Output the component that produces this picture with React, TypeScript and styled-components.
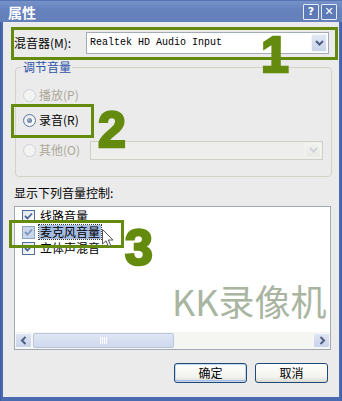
import React from 'react';
import styled, { createGlobalStyle } from 'styled-components';

const GlobalStyle = createGlobalStyle`
  html, body {
    margin: 0;
    padding: 0;
    background: #ebebeb;
  }
  body {
    font-family: "Noto Sans CJK SC", "Liberation Sans", sans-serif;
    font-size: 12px;
    color: #000;
  }
  * {
    box-sizing: border-box;
  }
`;

const Window = styled.div`
  position: relative;
  width: 342px;
  height: 401px;
  display: flex;
  flex-direction: column;
  background: #4565ab;
  overflow: hidden;
`;

const TitleBar = styled.div`
  height: 22px;
  display: flex;
  align-items: center;
  padding: 0 5px 0 8px;
  background: linear-gradient(#7792c9, #6682bd 40%, #6480bb);
  border-top: 1px solid #5674b4;
`;

const TitleText = styled.span`
  flex: 1;
  color: #fff;
  font-weight: bold;
  font-size: 14px;
  line-height: 16px;
`;

const TitleButtons = styled.div`
  display: flex;
  gap: 2px;
`;

const CaptionButton = styled.div`
  width: 16px;
  height: 16px;
  border: 1px solid #e4eaf6;
  border-radius: 1px;
  background: #5d79b6;
  color: #fff;
  font-family: "DejaVu Sans", sans-serif;
  font-weight: bold;
  font-size: 11px;
  line-height: 14px;
  text-align: center;
`;

const Frame = styled.div`
  flex: 1;
  display: flex;
  padding: 0 3px 4px 3px;
  background: linear-gradient(90deg, #3c5ca6, #4b6bb1 2px, #4b6bb1 calc(100% - 2px), #3c5ca6);
`;

const Client = styled.div`
  flex: 1;
  display: flex;
  flex-direction: column;
  background: #ebebeb;
  padding: 10px 7px 0 11px;
`;

const MixerRow = styled.div`
  display: flex;
  align-items: center;
  height: 22px;
`;

const FieldLabel = styled.span<{ width?: number; muted?: boolean }>`
  width: ${(p) => (p.width ? `${p.width}px` : 'auto')};
  flex: none;
  line-height: 16px;
  color: ${(p) => (p.muted ? '#aca899' : '#000')};
`;

const Combo = styled.div<{ width: number; height: number; disabled?: boolean }>`
  width: ${(p) => p.width}px;
  height: ${(p) => p.height}px;
  display: flex;
  padding: 1px;
  border: 1px solid ${(p) => (p.disabled ? '#cfcfc6' : '#a2abb6')};
  background: ${(p) => (p.disabled ? '#eeeeec' : '#fff')};
`;

const ComboText = styled.span`
  flex: 1;
  padding-left: 2px;
  font-family: "Liberation Mono", monospace;
  font-size: 10px;
  line-height: 18px;
  white-space: nowrap;
`;

const DropButton = styled.div<{ disabled?: boolean }>`
  width: 16px;
  display: flex;
  align-items: center;
  justify-content: center;
  border-radius: 2px;
  border: 1px solid ${(p) => (p.disabled ? '#f4f4f2' : '#f2f5fb')};
  background: ${(p) =>
    p.disabled
      ? 'linear-gradient(#f2f2f0, #e8e8e4)'
      : 'linear-gradient(#e2e8f4, #c9d3e8)'};
`;

const GroupBox = styled.div`
  margin: 13px 0 0 1px;
  width: 317px;
  padding: 0 0 16px 7px;
  border: 1px solid #d3d3ca;
  border-radius: 4px;
`;

const GroupTitle = styled.div`
  display: table;
  margin: -9px 0 0 -1px;
  padding: 0 1px;
  background: #ebebeb;
  color: #2c53a8;
  line-height: 16px;
`;

const RadioRow = styled.div<{ gapTop: number }>`
  display: flex;
  align-items: center;
  gap: 3px;
  height: 20px;
  margin-top: ${(p) => p.gapTop}px;
`;

const Radio = styled.span<{ checked?: boolean; disabled?: boolean }>`
  position: relative;
  width: 13px;
  height: 13px;
  flex: none;
  border-radius: 50%;
  border: 1px solid ${(p) => (p.disabled ? '#cdd3dc' : '#5a77a3')};
  background: ${(p) =>
    p.disabled
      ? '#f3f3f1'
      : 'radial-gradient(circle at 65% 65%, #ffffff, #e1e4ea)'};

  &::after {
    content: '';
    display: ${(p) => (p.checked ? 'block' : 'none')};
    position: absolute;
    left: 3px;
    top: 3px;
    width: 5px;
    height: 5px;
    border-radius: 50%;
    background: radial-gradient(circle at 40% 40%, #9fb0c8, #4b6590);
  }
`;

const Caption = styled.div`
  margin-top: 8px;
  line-height: 16px;
`;

const ListBox = styled.div`
  margin-top: 5px;
  width: 317px;
  height: 144px;
  display: flex;
  flex-direction: column;
  border: 1px solid #a0a9b5;
  background: #fff;
`;

const Items = styled.div`
  flex: 1;
  padding: 1px 0 0 7px;
`;

const ItemRow = styled.div`
  display: flex;
  align-items: center;
  gap: 4px;
  height: 16px;
`;

const CheckBox = styled.span<{ faded?: boolean }>`
  width: 13px;
  height: 13px;
  flex: none;
  display: flex;
  align-items: center;
  justify-content: center;
  border: 1px solid ${(p) => (p.faded ? '#8ea4c4' : '#4f6d99')};
  background: ${(p) =>
    p.faded ? '#c9d5e8' : 'linear-gradient(135deg, #dfe3ea, #ffffff)'};
`;

const ItemText = styled.span<{ selected?: boolean }>`
  padding: 0 1px;
  line-height: 14px;
  background: ${(p) => (p.selected ? '#a5bce3' : 'transparent')};
  outline: ${(p) => (p.selected ? '1px dotted #3a3a3a' : 'none')};
`;

const ScrollBar = styled.div`
  height: 17px;
  display: flex;
  padding: 1px 0;
  background: #f5f5f1;
`;

const ScrollButton = styled.div`
  width: 17px;
  flex: none;
  display: flex;
  align-items: center;
  justify-content: center;
  border: 1px solid #f6f8fc;
  border-radius: 2px;
  background: linear-gradient(#dde4f2, #cad4e9);
`;

const Thumb = styled.div`
  width: 141px;
  margin-left: 1px;
  display: flex;
  align-items: center;
  justify-content: center;
  border: 1px solid #b9c5dc;
  border-radius: 2px;
  background: linear-gradient(#dfe6f4, #cfd9ee);
`;

const Track = styled.div`
  flex: 1;
`;

const ButtonRow = styled.div`
  margin-top: 13px;
  display: flex;
  justify-content: flex-end;
  gap: 8px;
  padding-right: 4px;
`;

const PushButton = styled.button<{ primary?: boolean }>`
  width: 73px;
  height: 20px;
  padding: 0;
  border: 1px solid #1f4a75;
  border-radius: 3px;
  font-family: inherit;
  font-size: 12px;
  line-height: 16px;
  color: #000;
  background: linear-gradient(#ffffff, #f3f3ef 70%, #dcdcd6);
  box-shadow: ${(p) =>
    p.primary ? 'inset 0 0 0 1px #c5d6f2, inset 0 -1px 0 1px #a8bde6' : 'none'};
`;

const Highlight = styled.div<{ x: number; y: number; w: number; h: number }>`
  position: absolute;
  left: ${(p) => p.x}px;
  top: ${(p) => p.y}px;
  width: ${(p) => p.w}px;
  height: ${(p) => p.h}px;
  border: 3px solid #648b0e;
  pointer-events: none;
`;

const Marker = styled.div<{ x: number; y: number }>`
  position: absolute;
  left: ${(p) => p.x - 18}px;
  top: ${(p) => p.y - 5}px;
  width: 36px;
  text-align: center;
  font-family: "Liberation Sans", sans-serif;
  font-weight: bold;
  font-size: 50px;
  line-height: 1;
  color: #648b0e;
  -webkit-text-stroke: 2.5px #648b0e;
`;

const Watermark = styled.div`
  position: absolute;
  left: 172px;
  top: 282px;
  font-family: "Noto Sans CJK SC", sans-serif;
  font-size: 36px;
  line-height: 1;
  color: #a9b5a1;
  white-space: nowrap;
`;

const Cursor = styled.svg`
  position: absolute;
  left: 102px;
  top: 229px;
`;

function Chevron({ color }: { color: string }) {
  return (
    <svg width="9" height="6" viewBox="0 0 9 6">
      <path d="M1 1 L4.5 4.5 L8 1" fill="none" stroke={color} strokeWidth="2" />
    </svg>
  );
}

function Arrow({ dir }: { dir: 'left' | 'right' }) {
  const d = dir === 'left' ? 'M5.5 1 L2 4.5 L5.5 8' : 'M2.5 1 L6 4.5 L2.5 8';
  return (
    <svg width="8" height="9" viewBox="0 0 8 9">
      <path d={d} fill="none" stroke="#4d5f82" strokeWidth="2" />
    </svg>
  );
}

function Check({ color }: { color: string }) {
  return (
    <svg width="9" height="9" viewBox="0 0 9 9">
      <path d="M1 4 L3.5 6.5 L8 1.5" fill="none" stroke={color} strokeWidth="1.8" />
    </svg>
  );
}

const controls = [
  { label: '线路音量', selected: false },
  { label: '麦克风音量', selected: true },
  { label: '立体声混音', selected: false },
];

export default function App() {
  return (
    <>
      <GlobalStyle />
      <Window>
        <TitleBar>
          <TitleText>属性</TitleText>
          <TitleButtons>
            <CaptionButton>?</CaptionButton>
            <CaptionButton>✕</CaptionButton>
          </TitleButtons>
        </TitleBar>
        <Frame>
          <Client>
            <MixerRow>
              <FieldLabel width={72}>混音器(M):</FieldLabel>
              <Combo width={243} height={22}>
                <ComboText>Realtek HD Audio Input</ComboText>
                <DropButton>
                  <Chevron color="#4d6185" />
                </DropButton>
              </Combo>
            </MixerRow>

            <GroupBox>
              <GroupTitle>调节音量</GroupTitle>
              <RadioRow gapTop={10}>
                <Radio disabled />
                <FieldLabel muted>播放(P)</FieldLabel>
              </RadioRow>
              <RadioRow gapTop={5}>
                <Radio checked />
                <FieldLabel>录音(R)</FieldLabel>
              </RadioRow>
              <RadioRow gapTop={10}>
                <Radio disabled />
                <FieldLabel width={48} muted>
                  其他(O)
                </FieldLabel>
                <Combo width={233} height={19} disabled>
                  <ComboText />
                  <DropButton disabled>
                    <Chevron color="#cfd3da" />
                  </DropButton>
                </Combo>
              </RadioRow>
            </GroupBox>

            <Caption>显示下列音量控制:</Caption>
            <ListBox>
              <Items>
                {controls.map((c) => (
                  <ItemRow key={c.label}>
                    <CheckBox faded={c.selected}>
                      <Check color={c.selected ? '#7d95bb' : '#4a6795'} />
                    </CheckBox>
                    <ItemText selected={c.selected}>{c.label}</ItemText>
                  </ItemRow>
                ))}
              </Items>
              <ScrollBar>
                <ScrollButton>
                  <Arrow dir="left" />
                </ScrollButton>
                <Thumb>
                  <svg width="8" height="7" viewBox="0 0 8 7">
                    <path d="M0.5 0 V7 M2.5 0 V7 M4.5 0 V7 M6.5 0 V7" stroke="#ffffff" strokeWidth="1" />
                  </svg>
                </Thumb>
                <Track />
                <ScrollButton>
                  <Arrow dir="right" />
                </ScrollButton>
              </ScrollBar>
            </ListBox>

            <ButtonRow>
              <PushButton primary>确定</PushButton>
              <PushButton>取消</PushButton>
            </ButtonRow>
          </Client>
        </Frame>

        <Watermark>KK录像机</Watermark>

        <Highlight x={11} y={27} w={327} h={33} />
        <Highlight x={11} y={104} w={83} h={34} />
        <Highlight x={9} y={220} w={115} h={28} />

        <Marker x={275} y={35}>1</Marker>
        <Marker x={112} y={110}>2</Marker>
        <Marker x={139} y={228}>3</Marker>

        <Cursor width="12" height="19" viewBox="0 0 12 19">
          <path
            d="M0.5 0.5 L0.5 15 L4 11.8 L6.5 17.5 L8.7 16.5 L6.3 11 L11 11 Z"
            fill="#ffffff"
            stroke="#555"
            strokeWidth="1"
          />
        </Cursor>
      </Window>
    </>
  );
}
